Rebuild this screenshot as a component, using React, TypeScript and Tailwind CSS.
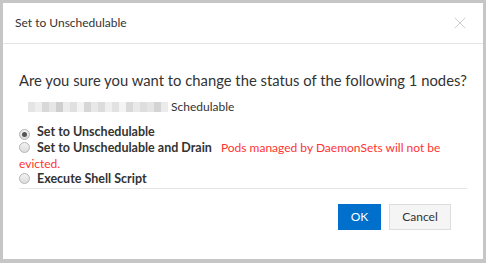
import { X } from 'lucide-react'

const blur = [
  '#e4e4e4', '#eeeeee', '#d8d8d8', '#e6e6e6', '#cfcfcf', '#ececec', '#e0e0e0', '#f3f3f3',
  '#d6d6d6', '#e8e8e8', '#dcdcdc', '#efefef', '#e2e2e2', '#f4f4f4', '#d9d9d9', '#e9e9e9',
  '#dedede', '#e5e5e5', '#d4d4d4', '#ebebeb',
]

function Radio({ checked }: { checked?: boolean }) {
  return (
    <span className="inline-flex w-[11px] h-[11px] rounded-full border border-[#b5b5b5] bg-gradient-to-b from-[#f2f2f2] to-[#dcdcdc] items-center justify-center shrink-0 align-[-1px] mr-[7px]">
      {checked && <span className="w-[5px] h-[5px] rounded-full bg-[#555]" />}
    </span>
  )
}

export default function App() {
  return (
    <div className="w-[486px] h-[263px] bg-[#c6c6c6] pt-[3px] pl-[3px] pr-[3px] pb-[4px] font-['Lato',sans-serif] text-[#333]">
      <div className="bg-white h-full flex flex-col">
        <div className="h-[41px] border-b border-[#e5e5e5] flex items-center justify-between pl-[12px] pr-[13px]">
          <span className="text-[12px]">Set to Unschedulable</span>
          <X className="w-[20px] h-[20px] text-[#c4c4c4]" strokeWidth={1} />
        </div>
        <div className="px-[16px] pt-[25px]">
          <p className="text-[14.8px] leading-[22px] whitespace-nowrap">Are you sure you want to change the status of the following 1 nodes?</p>
          <div className="flex items-center mt-[8px] pl-[9px] text-[12px] h-[16px]">
            <div className="flex h-[10px]">
              {blur.map((c, i) => (
                <span key={i} className="w-[7px] h-full" style={{ backgroundColor: c }} />
              ))}
            </div>
            <span className="ml-[3px]">Schedulable</span>
          </div>
          <div className="mt-[8px] text-[12px] leading-[16px]">
            <div className="font-bold text-[12.5px] leading-[17px]">
              <Radio checked />
              Set to Unschedulable
            </div>
            <div>
              <Radio />
              <span className="font-bold text-[12.5px]">Set to Unschedulable and Drain</span>
              <span className="ml-[9px] text-[#f33]">Pods managed by DaemonSets will not be evicted.</span>
            </div>
            <div className="font-bold text-[12.5px] leading-[14px]">
              <Radio />
              Execute Shell Script
            </div>
          </div>
          <div className="border-t border-[#e5e5e5] mt-[2px]" />
          <div className="flex justify-end gap-[8px] mt-[15px] pr-[16px]">
            <button className="h-[26px] w-[43px] bg-[#0070cc] text-white text-[12px]">OK</button>
            <button className="h-[26px] w-[62px] bg-[#f5f5f5] border border-[#ddd] text-[12px] text-[#333]">Cancel</button>
          </div>
        </div>
      </div>
    </div>
  )
}
